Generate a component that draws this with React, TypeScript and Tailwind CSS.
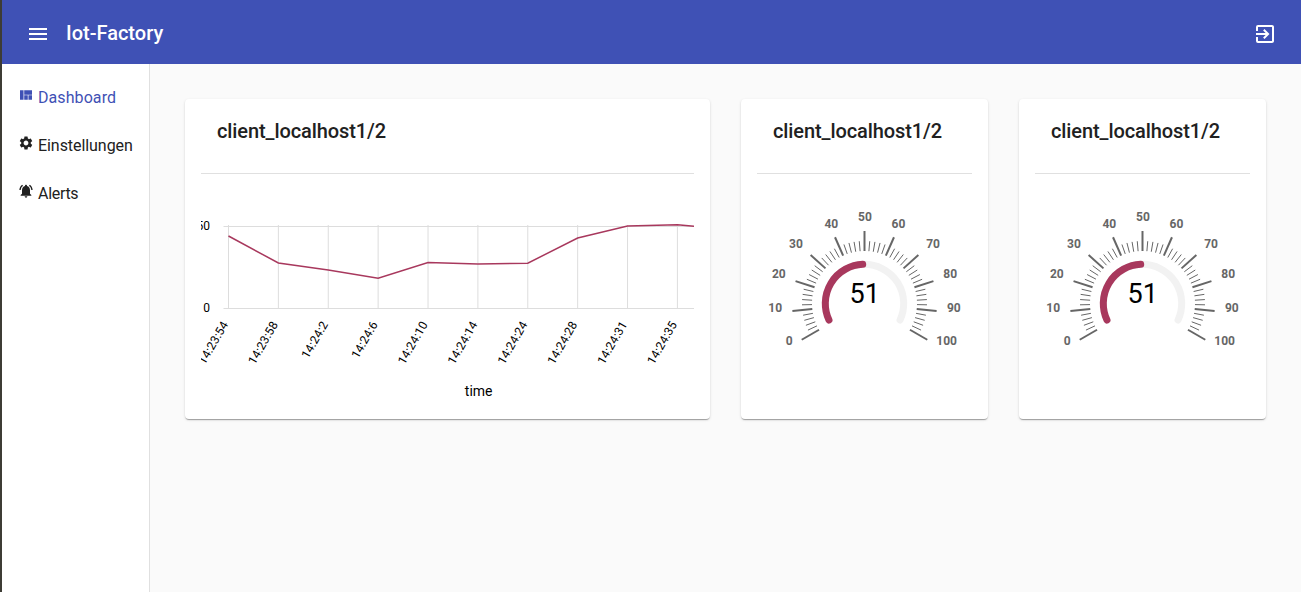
import React from "react";
import { MdExitToApp, MdMenu, MdNotificationsActive, MdSettings, MdViewQuilt } from "react-icons/md";

const navItems = [
  { label: "Dashboard", Icon: MdViewQuilt, active: true, tracking: "tracking-[0.08px]" },
  { label: "Einstellungen", Icon: MdSettings, active: false, tracking: "tracking-[-0.06px]" },
  { label: "Alerts", Icon: MdNotificationsActive, active: false, tracking: "tracking-[-0.3px]" },
];

const samples = [
  { time: "14:23:54", y: 52 },
  { time: "14:23:58", y: 79 },
  { time: "14:24:2", y: 86 },
  { time: "14:24:6", y: 94.3 },
  { time: "14:24:10", y: 78.5 },
  { time: "14:24:14", y: 80 },
  { time: "14:24:24", y: 79.2 },
  { time: "14:24:28", y: 54 },
  { time: "14:24:31", y: 42 },
  { time: "14:24:35", y: 40.8 },
];

const xAt = (i: number) => 27.5 + i * 49.88;

function LineChart() {
  const points = samples.map((s, i) => `${xAt(i)},${s.y}`).join(" ") + " 493,42.3";
  return (
    <svg width="493" height="230" viewBox="0 0 493 230" className="block overflow-hidden font-[Roboto,sans-serif]">
      <g stroke="#dddddd" strokeWidth="1">
        <line x1="22.5" x2="493" y1="42.5" y2="42.5" />
        <line x1="22.5" x2="493" y1="124.5" y2="124.5" />
        {samples.map((s, i) => (
          <line key={s.time} x1={xAt(i)} x2={xAt(i)} y1="41" y2="124.5" />
        ))}
      </g>
      <text x="9" y="46" textAnchor="end" fontSize="12">50</text>
      <text x="9" y="128" textAnchor="end" fontSize="12">0</text>
      {samples.map((s, i) => (
        <text
          key={s.time}
          transform={`translate(${xAt(i) + 0.1} 140.2) rotate(-60)`}
          textAnchor="end"
          fontSize="12"
          letterSpacing="0.15"
        >
          {s.time}
        </text>
      ))}
      <text x="277.7" y="212" textAnchor="middle" fontSize="14">time</text>
      <polyline points={points} fill="none" stroke="#a8385d" strokeWidth="1.5" />
    </svg>
  );
}

const CX = 107.5;
const CY = 119.5;

function polar(radius: number, degrees: number) {
  const a = (degrees * Math.PI) / 180;
  return { x: CX + radius * Math.sin(a), y: CY - radius * Math.cos(a) };
}

function arc(radius: number, from: number, to: number) {
  const a = polar(radius, from);
  const b = polar(radius, to);
  return `M${a.x} ${a.y}A${radius} ${radius} 0 ${to - from > 180 ? 1 : 0} 1 ${b.x} ${b.y}`;
}

function Gauge({ value }: { value: number }) {
  const ticks = Array.from({ length: 51 }, (_, i) => i * 2);
  return (
    <svg width="215" height="230" viewBox="0 0 215 230" className="block overflow-hidden font-[Roboto,sans-serif]">
      <g fill="none" strokeWidth="7" strokeLinecap="round">
        <path d={arc(39.2, -115, 115)} stroke="#f2f2f2" />
        <path d={arc(39.2, -115, -125 + value * 2.4)} stroke="#a8385d" />
      </g>
      {ticks.map((t) => {
        const major = t % 10 === 0;
        const angle = -120 + t * 2.4;
        const a = polar(52.5, angle);
        const b = polar(major ? 72.5 : 62.5, angle);
        return (
          <line key={t} x1={a.x} y1={a.y} x2={b.x} y2={b.y} stroke="#666666" strokeWidth={major ? 2 : 1} />
        );
      })}
      {ticks.filter((t) => t % 10 === 0).map((t) => {
        const p = polar(82.5, -120 + t * 2.4);
        const anchor = t < 40 ? "end" : t > 60 ? "start" : "middle";
        const nudge = t < 40 ? -0.3 : 0.4;
        return (
          <text key={t} x={p.x + nudge} y={p.y} textAnchor={anchor} fontSize="12" fontWeight="700" fill="#666666">
            {t}
          </text>
        );
      })}
      <text x={CX + 0.2} y="119" textAnchor="middle" fontSize="27">{value}</text>
    </svg>
  );
}

function Card({ width, children }: { width: string; children: React.ReactNode }) {
  return (
    <section
      className={`${width} h-80 shrink-0 rounded-[4px] bg-white px-4 shadow-[0_2px_1px_-1px_rgba(0,0,0,0.2),0_1px_1px_0_rgba(0,0,0,0.14),0_1px_3px_0_rgba(0,0,0,0.12)]`}
    >
      <h2 className="h-[75px] border-b border-[#e0e0e0] px-4 pt-4 text-[20px] leading-8 font-medium tracking-[-0.09px] text-[#212121]">
        client_localhost1/2
      </h2>
      <div className="pt-[10px]">{children}</div>
    </section>
  );
}

export default function App() {
  return (
    <div className="flex h-[592px] w-[1301px] overflow-hidden bg-[#fafafa] font-[Roboto,sans-serif]">
      <div className="w-[2px] shrink-0 bg-[#3d3c35]" />
      <div className="flex min-w-0 flex-1 flex-col">
        <header className="flex h-16 shrink-0 items-center bg-[#3f51b5] px-6 pt-1 text-white">
          <MdMenu size={24} />
          <h1 className="-mt-0.5 ml-4 flex-1 text-[20px] leading-8 font-medium">Iot-Factory</h1>
          <MdExitToApp size={24} />
        </header>
        <div className="flex min-h-0 flex-1">
          <nav className="w-[148px] shrink-0 border-r border-[#e0e0e0] bg-white pt-[9px]">
            {navItems.map(({ label, Icon, active, tracking }) => (
              <a
                key={label}
                className={`flex h-12 items-center gap-1 px-4 text-[16px] ${active ? "text-[#3f51b5]" : "text-[#212121]"}`}
              >
                <Icon size={16} className="mb-1 shrink-0" />
                <span className={`pt-[2px] ${tracking}`}>{label}</span>
              </a>
            ))}
          </nav>
          <main className="flex flex-1 gap-[31px] pt-[35px] pl-[35px]">
            <Card width="w-[525px]"><LineChart /></Card>
            <Card width="w-[247px]"><Gauge value={51} /></Card>
            <Card width="w-[247px]"><Gauge value={51} /></Card>
          </main>
        </div>
      </div>
    </div>
  );
}
